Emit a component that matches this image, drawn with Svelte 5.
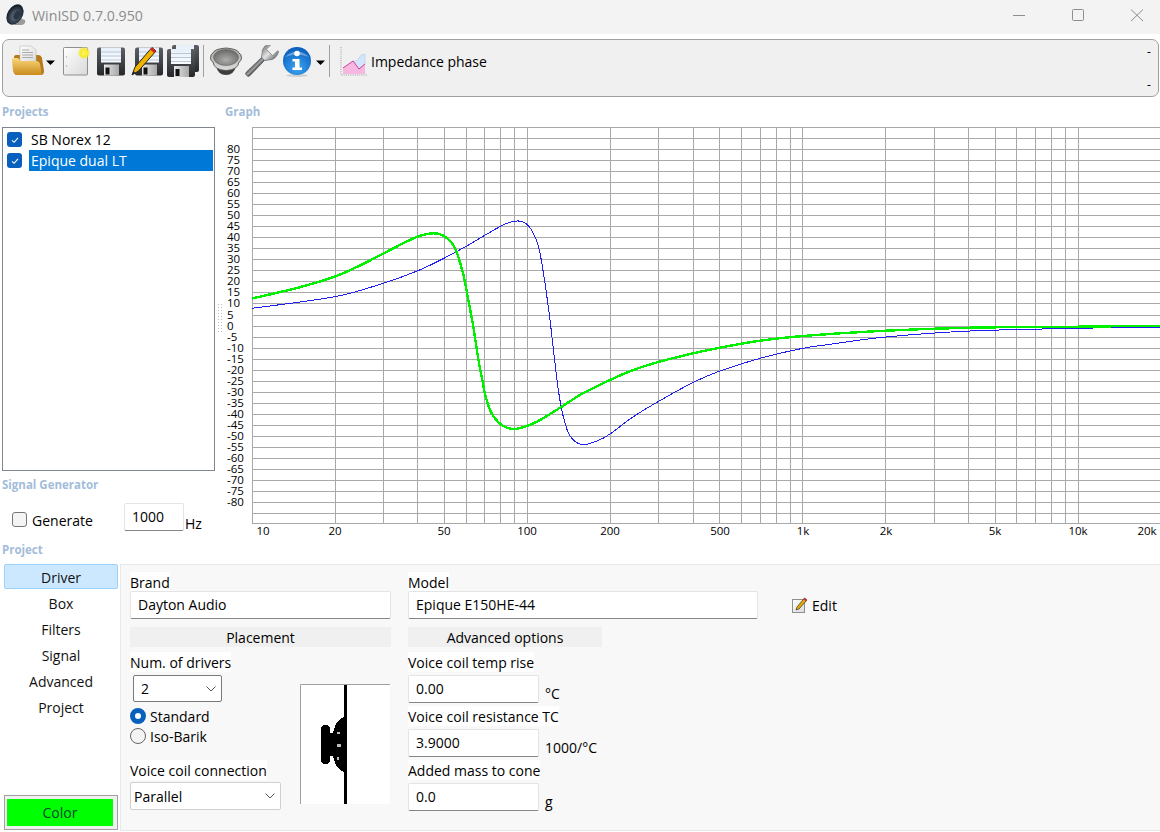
<script>
  const tabs = ['Driver', 'Box', 'Filters', 'Signal', 'Advanced', 'Project']
  const xOf = (f) => 252.3 + 275.2 * Math.log10(f / 10)

  // log grid, 10 Hz up to 10 kHz (nothing is drawn past the 10k line)
  const vlines = []
  for (const d of [10, 100, 1000]) {
    for (let m = 1; m < 10; m++) vlines.push(Math.floor(xOf(d * m)) + 0.5)
  }
  vlines.push(1078.5)
  const hlines = []
  for (let i = 0; i < 36; i++) hlines.push(Math.floor(127.5 + i * 11.03) + 0.5)

  const yTicks = []
  for (let v = 80; v >= -80; v -= 5) yTicks.push({ v, y: 127.5 + ((90 - v) / 5) * 11.03 + 3.5 })

  const xTicks = [
    ['10', 263], ['20', 335], ['50', 444], ['100', 527], ['200', 610], ['500', 720],
    ['1k', 803], ['2k', 886], ['5k', 995], ['10k', 1078], ['20k', 1147]
  ]

  const green = [
    [252, 298.5], [298, 287.7], [335, 276.5], [360, 265.5], [383, 253.7], [415, 237.7], [433, 233.3], [445, 236.7],
    [455, 248.3], [463, 273.3], [468.3, 300], [473.3, 326.7], [478.3, 359], [481.7, 376.7], [485.7, 396.7],
    [491.7, 413.3], [501.7, 425], [513.3, 429], [525, 426.7], [538.3, 421], [561.7, 406.7], [581.7, 394],
    [610, 380], [633.3, 370], [659.3, 361.7], [693.3, 353.3], [720, 347.7], [760, 340.7], [803, 336], [886, 330.7],
    [970, 327.7], [1078, 326.7], [1160, 325.7]
  ]
  const blue = [
    [252, 308.3], [335, 296.7], [383, 283.3], [418, 270.7], [445, 257.7], [466.7, 246], [501.7, 225.7],
    [516.7, 221], [526.7, 224], [535, 236.7], [540, 253.3], [545, 283.3], [550, 320], [552.3, 340], [555, 363],
    [558.3, 390], [563.3, 416.7], [570, 436], [581.7, 444.5], [597, 441], [610, 434], [633.3, 416.7], [659.3, 401],
    [693.3, 382.3], [720, 371], [760, 358.3], [803, 348.3], [830, 344.3], [886, 337], [970, 331], [1078, 328.3], [1160, 327]
  ]

  // catmull-rom through the read-off points
  function smooth(pts) {
    let d = `M${pts[0][0]} ${pts[0][1]}`
    for (let i = 0; i < pts.length - 1; i++) {
      const p0 = pts[Math.max(i - 1, 0)]
      const p1 = pts[i]
      const p2 = pts[i + 1]
      const p3 = pts[Math.min(i + 2, pts.length - 1)]
      const c1x = p1[0] + (p2[0] - p0[0]) / 6
      const c1y = p1[1] + (p2[1] - p0[1]) / 6
      const c2x = p2[0] - (p3[0] - p1[0]) / 6
      const c2y = p2[1] - (p3[1] - p1[1]) / 6
      d += ` C${c1x} ${c1y} ${c2x} ${c2y} ${p2[0]} ${p2[1]}`
    }
    return d
  }
</script>

{#snippet floppy(x, y)}
  <g transform="translate({x} {y})">
    <path d="M0 2 q0-2 2-2 h24 q2 0 2 2 v24 q0 2-2 2 h-24 q-2 0-2-2z" fill="url(#fDark)" />
    <rect x="4" y="0" width="20" height="15" fill="url(#fLabel)" />
    <path d="M4 4.5h20M4 8.5h20M4 12.5h20" stroke="#a9bcd0" stroke-width="0.8" />
    <rect x="7" y="17" width="15" height="11" fill="url(#fShutter)" />
    <rect x="8.5" y="20" width="4" height="7" fill="#111" />
  </g>
{/snippet}

{#snippet chevron(w)}
  <svg class="chev" width={w} height="6" viewBox="0 0 10 6"><path d="M0.5 0.5L5 5L9.5 0.5" fill="none" stroke="#555" stroke-width="1" /></svg>
{/snippet}

{#snippet tick()}
  <span class="check"><svg width="8" height="8" viewBox="0 0 8 8"><path d="M1 4.3L3.1 6.3L7 1.8" fill="none" stroke="#fff" stroke-width="1.1" /></svg></span>
{/snippet}

<svg class="defs" width="0" height="0">
  <defs>
    <linearGradient id="fDark" x1="0" y1="0" x2="0" y2="1"><stop offset="0" stop-color="#5c6065" /><stop offset="1" stop-color="#26282b" /></linearGradient>
    <linearGradient id="fLabel" x1="0" y1="0" x2="0" y2="1"><stop offset="0" stop-color="#e6eef8" /><stop offset="1" stop-color="#fafcff" /></linearGradient>
    <linearGradient id="fShutter" x1="0" y1="0" x2="1" y2="0"><stop offset="0" stop-color="#e8e8e8" /><stop offset="1" stop-color="#a8a8a8" /></linearGradient>
    <linearGradient id="folder" x1="0" y1="0" x2="0" y2="1"><stop offset="0" stop-color="#fbd77a" /><stop offset="1" stop-color="#c98a1e" /></linearGradient>
    <linearGradient id="paper" x1="0" y1="0" x2="1" y2="1"><stop offset="0" stop-color="#ffffff" /><stop offset="1" stop-color="#d9d9d9" /></linearGradient>
    <radialGradient id="glow"><stop offset="0" stop-color="#fff46a" /><stop offset="0.6" stop-color="#f8ea2a" /><stop offset="1" stop-color="#f8ea2a" stop-opacity="0" /></radialGradient>
    <radialGradient id="cone" cy="0.65" r="0.6"><stop offset="0" stop-color="#adadab" /><stop offset="1" stop-color="#6c6c6a" /></radialGradient>
    <linearGradient id="rim" x1="0" y1="0" x2="0" y2="1"><stop offset="0" stop-color="#a8a8a6" /><stop offset="1" stop-color="#dcdcda" /></linearGradient>
    <linearGradient id="metal" x1="0" y1="0" x2="1" y2="0"><stop offset="0" stop-color="#55585c" /><stop offset="0.5" stop-color="#a0a2a4" /><stop offset="1" stop-color="#3c3f42" /></linearGradient>
    <linearGradient id="wrenchHead" x1="0" y1="0" x2="1" y2="0"><stop offset="0" stop-color="#8a8c8f" /><stop offset="0.5" stop-color="#e2e2e2" /><stop offset="1" stop-color="#77797c" /></linearGradient>
    <radialGradient id="info" cx="0.5" cy="0.75" r="0.8"><stop offset="0" stop-color="#3fa6f2" /><stop offset="1" stop-color="#0457b8" /></radialGradient>
    <radialGradient id="titleCone" cx="0.55" cy="0.55"><stop offset="0" stop-color="#6d7c8c" /><stop offset="1" stop-color="#16212c" /></radialGradient>
  </defs>
</svg>

<div class="app">
  <header class="titlebar">
    <svg class="appicon" width="22" height="22" viewBox="0 0 22 22">
      <path d="M12 13 L20 16 Q21 20 17 21 L9 21Z" fill="#9a9a9a" />
      <ellipse cx="10" cy="10.5" rx="7.5" ry="11" transform="rotate(32 10 10.5)" fill="url(#titleCone)" />
      <ellipse cx="12" cy="11" rx="3" ry="4.6" transform="rotate(32 12 11)" fill="#2a3644" />
    </svg>
    <span class="title">WinISD 0.7.0.950</span>
    <div class="winbtns">
      <svg width="14" height="14" viewBox="0 0 14 14"><path d="M1 7.5h12" stroke="#8e8e8e" /></svg>
      <svg width="14" height="14" viewBox="0 0 14 14"><rect x="1.5" y="1.5" width="11" height="11" rx="1" fill="none" stroke="#8e8e8e" /></svg>
      <svg width="14" height="14" viewBox="0 0 14 14"><path d="M1 1.5L13 13M13 1.5L1 13" stroke="#8e8e8e" /></svg>
    </div>
  </header>

  <div class="toolbar">
    <svg width="48" height="32" viewBox="10 45 48 32">
      <path d="M14 57 q0-2 2-2 h22 q3 0 4 3 l2 13 q0 4-3 4 h-24 q-3 0-3-4z" fill="#b5781a" />
      <path d="M20 63 V46 H31 L36 50 V63z" fill="url(#paper)" stroke="#b9b9b9" stroke-width="0.6" />
      <path d="M22 50h7M22 52.5h11M22 55h11M22 57.5h11" stroke="#9a9a9a" stroke-width="0.8" />
      <path d="M12 60 Q12 58 14 58 H18 L21 61 H36 Q39 61 40 64 L42 75 H18 Q14 75 13 71z" fill="url(#folder)" />
      <path d="M46 60.5h9l-4.5 4.5z" fill="#000" />
    </svg>
    <svg width="36" height="32" viewBox="58 45 36 32">
      <rect x="63.5" y="47.5" width="24" height="27.5" rx="1" fill="url(#paper)" stroke="#8f8f8f" />
      <circle cx="66.5" cy="57" r="0.7" fill="#aaa" /><circle cx="66.5" cy="66" r="0.7" fill="#aaa" />
      <circle cx="84" cy="53" r="6.5" fill="url(#glow)" />
    </svg>
    <svg width="35" height="32" viewBox="94 45 35 32">
      {@render floppy(97, 47.5)}
    </svg>
    <svg width="36" height="32" viewBox="129 45 36 32">
      {@render floppy(135, 47.5)}
      <path d="M132 75 L135 67 L152 47.5 L156 51 L138.5 71z" fill="#f0b400" stroke="#222" stroke-width="1" />
      <path d="M152 47.5 L156 51 L154 53 L150 49.5z" fill="#d8232a" />
      <path d="M132 75 L133.5 71 L135.5 73z" fill="#222" />
    </svg>
    <svg width="38" height="32" viewBox="165 45 38 32">
      <rect x="172" y="45" width="27" height="27" rx="2" fill="url(#fDark)" />
      <rect x="176" y="45" width="18" height="11" fill="url(#fLabel)" />
      {@render floppy(167, 49)}
    </svg>
    <span class="sep"></span>
    <svg width="36" height="32" viewBox="207 45 36 32">
      <path d="M216 66 Q218 75 226 75 Q234 75 236 66z" fill="#3e3e3e" />
      <path d="M210.5 58 Q210.5 54 213 53 Q214 49 226 48 Q238 49 239 53 Q241.5 54 241.5 58 Q241.5 61 239 62 Q238 70 226 70.5 Q214 70 213 62 Q210.5 61 210.5 58z" fill="url(#rim)" stroke="#555" stroke-width="0.9" />
      <ellipse cx="226" cy="57.5" rx="12.5" ry="8" fill="url(#cone)" stroke="#666" stroke-width="0.6" />
    </svg>
    <svg width="36" height="32" viewBox="243 45 36 32">
      <g transform="rotate(45 261 61)">
        <path d="M259 55 h4 l0.6 24 q0 2.5-2.6 2.5 q-2.6 0-2.6-2.5z" fill="url(#metal)" stroke="#444" stroke-width="0.5" />
        <path d="M255 42 Q251 50 256.5 55 L258.5 58 h5 L265.5 55 Q271 50 267 42 L265.5 42 V49 H256.5 V42z" fill="url(#wrenchHead)" stroke="#666" stroke-width="0.6" />
      </g>
    </svg>
    <svg width="49" height="32" viewBox="279 45 49 32">
      <ellipse cx="297" cy="75.5" rx="11" ry="1.5" fill="#cfcfcf" />
      <circle cx="297" cy="61" r="14" fill="url(#info)" />
      <path d="M285 57 Q297 46 309 57 Q297 52 285 57z" fill="#fff" fill-opacity="0.35" />
      <circle cx="297" cy="53.5" r="2.8" fill="#fff" />
      <path d="M292.5 59 H299.5 V67.5 H302 V70 H292.5 V67.5 H295 V61.5 H292.5z" fill="#fff" />
      <path d="M316 60.5h9l-4.5 4.5z" fill="#000" />
    </svg>
    <span class="sep second"></span>
    <svg width="34" height="32" viewBox="334 45 34 32">
      <path d="M340 47V75H366" fill="none" stroke="#9a9a9a" stroke-dasharray="1 1.2" />
      <path d="M342 74V68L352 61L358 69L364 64V74z" fill="#f6b8e0" />
      <path d="M352 61L358 69L364 64V54Q360 54 358 58Q356 62 352 61z" fill="#d4e4fb" stroke="#a9c4ea" stroke-width="0.5" />
      <path d="M342 68L352 61L358 69L364 64" fill="none" stroke="#d23f9a" stroke-width="1" />
    </svg>
    <span class="tb-text">Impedance phase</span>
    <div class="marks"><span>-</span><span>-</span></div>
  </div>

  <div class="upper">
    <div class="leftcol">
      <div class="section">Projects</div>
      <div class="listbox">
        <div class="row">{@render tick()}<span class="row-text">SB Norex 12</span></div>
        <div class="row">{@render tick()}<span class="row-text selected">Epique dual LT</span></div>
      </div>
      <div class="section sig">Signal Generator</div>
      <div class="generator">
        <span class="box"></span>
        <span class="gen-label">Generate</span>
        <input class="field hz" value="1000" readonly />
        <span class="hz-unit">Hz</span>
      </div>
    </div>
    <div class="grip"></div>
    <div class="graph">
      <div class="section">Graph</div>
      <svg class="plot" width="938" height="421" viewBox="222 120 938 421">
        <g stroke="#a9a9a9" shape-rendering="crispEdges">
          {#each hlines as y}<line x1="252" x2="1160" y1={y} y2={y} />{/each}
          <line x1="252" x2="1160" y1="523.5" y2="523.5" />
          {#each vlines as x}<line x1={x} x2={x} y1="127" y2="524" />{/each}
        </g>
        <g fill="none" shape-rendering="crispEdges">
          <path d={smooth(blue)} stroke="#1f1ff0" stroke-width="1" />
          <path d={smooth(green)} stroke="#00f000" stroke-width="2.4" />
        </g>
        <g class="ticks">
          {#each yTicks as t}<text x="227" y={t.y}>{t.v}</text>{/each}
          {#each xTicks as t}<text x={t[1]} y="535" text-anchor="middle">{t[0]}</text>{/each}
        </g>
      </svg>
    </div>
  </div>

  <div class="section project">Project</div>
  <div class="lower">
    <nav class="tabs">
      {#each tabs as t, i}
        <div class="tab" class:active={i === 0}>{t}</div>
      {/each}
      <div class="color"><span>Color</span></div>
    </nav>
    <section class="panel">
      <div class="col one">
        <span class="lbl top">Brand</span>
        <input class="field wide" value="Dayton Audio" readonly />
        <div class="head">Placement</div>
        <span class="lbl">Num. of drivers</span>
        <div class="place">
          <div class="place-left">
            <div class="select small"><span>2</span>{@render chevron(10)}</div>
            <div class="radio first"><span class="dot on"></span>Standard</div>
            <div class="radio"><span class="dot"></span>Iso-Barik</div>
            <span class="lbl vc">Voice coil connection</span>
            <div class="select conn"><span>Parallel</span>{@render chevron(10)}</div>
          </div>
          <svg class="driver" width="90" height="120" viewBox="0 0 90 120">
            <rect width="90" height="120" fill="#fff" />
            <path d="M0.5 120V0.5H90" fill="none" stroke="#a0a0a0" />
            <g shape-rendering="crispEdges" fill="#000">
              <rect x="44" y="1" width="3" height="119" />
              <path d="M21 44 L23 41 L28 41 L30 44 L30 49 L33 49 L36 40 L40 35 L44 33 V88 L40 86 L36 81 L33 72 L30 72 L30 77 L28 80 L23 80 L21 77z" />
            </g>
            <g fill="#bbb" shape-rendering="crispEdges">
              <rect x="37" y="48" width="3" height="2" /><rect x="37" y="60" width="4" height="3" /><rect x="37" y="73" width="2" height="3" />
            </g>
          </svg>
        </div>
      </div>

      <div class="col two">
        <span class="lbl top">Model</span>
        <input class="field model" value="Epique E150HE-44" readonly />
        <div class="head adv">Advanced options</div>
        <span class="lbl">Voice coil temp rise</span>
        <div class="unit-row"><input class="field num" value="0.00" readonly /><span class="unit">°C</span></div>
        <span class="lbl">Voice coil resistance TC</span>
        <div class="unit-row"><input class="field num" value="3.9000" readonly /><span class="unit">1000/°C</span></div>
        <span class="lbl">Added mass to cone</span>
        <div class="unit-row"><input class="field num" value="0.0" readonly /><span class="unit">g</span></div>
      </div>

      <div class="edit">
        <svg width="16" height="17" viewBox="0 0 16 17">
          <rect x="0.5" y="2.5" width="12" height="13" fill="url(#paper)" stroke="#8f8f8f" />
          <path d="M4 13 L5 10 L12.5 1 L15 3 L7 12z" fill="#e8a800" stroke="#333" stroke-width="0.7" />
          <path d="M12.5 1 L15 3 L14 4.2 L11.5 2.2z" fill="#d8232a" />
        </svg>
        <span>Edit</span>
      </div>
    </section>
  </div>
</div>

<style>
  :global(body) {
    margin: 0;
    background: #fff;
  }
  .defs {
    position: absolute;
  }
  svg {
    display: block;
    flex: none;
  }
  .app {
    width: 1160px;
    height: 832px;
    overflow: hidden;
    font-family: "Open Sans", "Noto Sans", sans-serif;
    font-size: 14px;
    color: #000;
  }
  .titlebar {
    height: 34px;
    background: #f3f3f3;
    display: flex;
    align-items: center;
    padding-left: 5px;
  }
  .appicon {
    margin-bottom: 4px;
  }
  .title {
    margin-left: 5px;
    margin-bottom: 4px;
    color: #8c8c8c;
    font-size: 14.2px;
  }
  .winbtns {
    margin-left: auto;
    display: flex;
    gap: 45px;
    padding-right: 16px;
    margin-bottom: 4px;
  }
  .toolbar {
    margin: 5px 1px 0 2px;
    border: 1px solid #a0a0a0;
    border-radius: 7px;
    background: #f0f0f0;
    display: flex;
    align-items: flex-start;
    padding: 5px 0 0 7px;
    height: 51px;
  }
  .sep {
    width: 1px;
    height: 32px;
    background: #a0a0a0;
    margin: 0 3px 0 0;
  }
  .sep.second {
    margin: 0 5px 0 1px;
  }
  .tb-text {
    margin: 7px 0 0 2px;
  }
  .marks {
    margin-left: auto;
    width: 11px;
    height: 47px;
    display: flex;
    flex-direction: column;
    justify-content: space-between;
    font-size: 12px;
    line-height: 14px;
  }
  .section {
    height: 16px;
    line-height: 16px;
    font-size: 11.5px;
    font-weight: 700;
    color: #a3bcda;
  }
  .upper {
    display: flex;
    height: 438px;
    margin-top: 7px;
  }
  .leftcol {
    width: 213px;
    margin-left: 2px;
  }
  .listbox {
    margin-top: 7px;
    border: 1px solid #7f8690;
    padding-top: 1px;
    height: 341px;
  }
  .row {
    display: flex;
    align-items: center;
    height: 21px;
    padding-left: 4px;
  }
  .check {
    width: 15px;
    height: 15px;
    border-radius: 3px;
    background: #0860bc;
    display: flex;
    align-items: center;
    justify-content: center;
    flex: none;
  }
  .row-text {
    margin-left: 7px;
    padding-left: 2px;
    flex: 1;
    margin-right: 1px;
    line-height: 21px;
  }
  .row-text.selected {
    background: #0078d7;
    color: #fff;
  }
  .sig {
    margin-top: 6px;
  }
  .generator {
    display: flex;
    align-items: flex-start;
    margin-top: 10px;
    padding-left: 10px;
  }
  .box {
    width: 13px;
    height: 13px;
    margin-top: 9px;
    border: 1px solid #777;
    border-radius: 3px;
    background: #f4f4f4;
    flex: none;
  }
  .gen-label {
    margin: 8px 0 0 5px;
    width: 92px;
  }
  .field {
    box-sizing: border-box;
    height: 28px;
    display: block;
    font: inherit;
    color: #000;
    background: #fff;
    border: 1px solid #e4e4e4;
    border-bottom: 1px solid #868686;
    border-radius: 2px;
    padding: 0 7px 2px;
    outline: none;
    margin: 0;
  }
  .hz {
    width: 60px;
  }
  .hz-unit {
    margin: 11px 0 0 1px;
  }
  .grip {
    width: 7px;
    height: 29px;
    margin: 199px 0 0 2px;
    background-image: radial-gradient(#bdbdbd 0.8px, transparent 1px);
    background-size: 3px 3px;
  }
  .graph {
    flex: 1;
    margin-left: -2px;
  }
  .graph .section {
    margin-left: 3px;
  }
  .ticks {
    font-size: 11.5px;
    fill: #000;
  }
  .project {
    margin-left: 2px;
  }
  .lower {
    display: flex;
    height: 267px;
    margin-top: 6px;
  }
  .tabs {
    width: 120px;
    box-sizing: border-box;
    padding-left: 4px;
    display: flex;
    flex-direction: column;
  }
  .tab {
    width: 114px;
    height: 26px;
    box-sizing: border-box;
    text-align: center;
    line-height: 28px;
    color: #111;
  }
  .tab.active {
    background: #cce8ff;
    border: 1px solid #99d1ff;
    border-radius: 2px;
    line-height: 26px;
    height: 25px;
    margin-bottom: 1px;
  }
  .color {
    margin-top: auto;
    margin-bottom: 1px;
    width: 114px;
    height: 35px;
    box-sizing: border-box;
    border: 1px solid #a0a0a0;
    padding: 3px 4px 3px 2px;
    display: flex;
    background: #f0f0f0;
  }
  .color span {
    flex: 1;
    background: #00ff00;
    text-align: center;
    line-height: 28px;
    color: #043;
  }
  .panel {
    flex: 1;
    box-sizing: border-box;
    height: 267px;
    background: #f8f8f8;
    border: 1px solid #e8e8e8;
    border-right: 0;
    display: flex;
    padding: 7px 0 0 9px;
  }
  .col {
    display: flex;
    flex-direction: column;
    align-items: flex-start;
  }
  .col.one {
    width: 261px;
  }
  .col.two {
    width: 350px;
    margin-left: 17px;
  }
  .lbl {
    display: block;
    background: #fff;
    height: 20px;
    line-height: 22px;
    white-space: nowrap;
  }
  .lbl.top {
    height: 19px;
  }
  .wide {
    width: 261px;
  }
  .model {
    width: 350px;
  }
  .head {
    width: 100%;
    height: 20px;
    line-height: 21px;
    background: #f0f0f0;
    text-align: center;
    margin: 8px 0 5px;
  }
  .head.adv {
    width: 194px;
  }
  .place {
    display: flex;
    width: 100%;
  }
  .place-left {
    width: 170px;
    padding-top: 3px;
  }
  .select {
    box-sizing: border-box;
    height: 28px;
    display: flex;
    align-items: center;
    justify-content: space-between;
    background: #fff;
    padding: 0 5px 0 7px;
  }
  .small {
    width: 89px;
    margin-left: 3px;
    border: 1px solid #7a7a7a;
    border-radius: 2px;
    height: 27px;
  }
  .conn {
    width: 151px;
    border: 1px solid #d0d0d0;
    border-radius: 2px;
    padding-left: 3px;
  }
  .radio {
    display: flex;
    align-items: center;
    height: 20px;
    gap: 4px;
  }
  .radio.first {
    margin-top: 4px;
  }
  .dot {
    width: 14px;
    height: 14px;
    border: 1px solid #666;
    border-radius: 50%;
    background: #f4f4f4;
    flex: none;
  }
  .dot.on {
    width: 6px;
    height: 6px;
    border: 5px solid #0860bc;
    background: #fff;
  }
  .vc {
    width: max-content;
    margin-top: 14px;
    margin-bottom: 2px;
  }
  .driver {
    margin: 12px 0 0 0;
  }
  .num {
    width: 131px;
  }
  .unit-row {
    display: flex;
    margin: 3px 0;
  }
  .unit {
    margin: 9px 0 0 6px;
  }
  .edit {
    display: flex;
    align-items: center;
    gap: 4px;
    margin: 23px 0 0 34px;
    height: 20px;
  }
</style>
